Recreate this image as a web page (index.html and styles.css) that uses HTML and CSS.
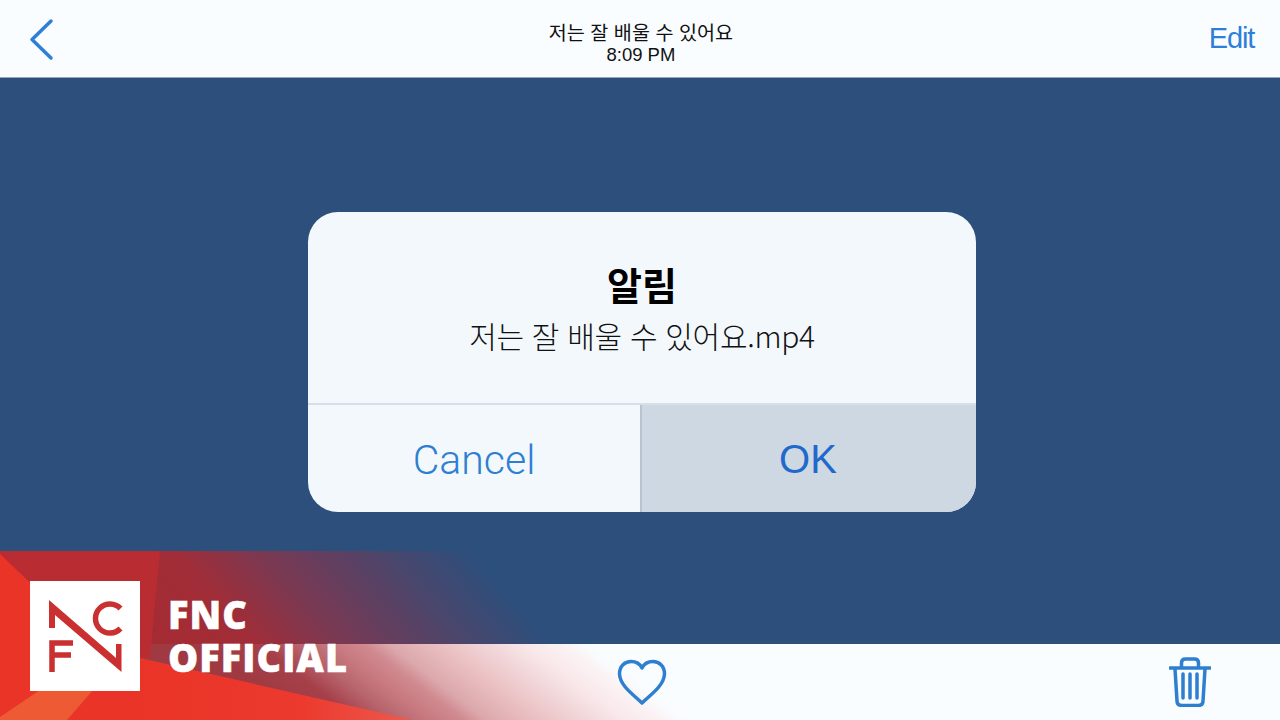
FILE: index.html
```html
<!DOCTYPE html>
<html lang="ko">

<head>
  <meta charset="utf-8">
  <title>저는 잘 배울 수 있어요</title>
  <link rel="stylesheet" href="styles.css">
</head>

<body>

  <div class="screen">
    <header class="topbar">
      <svg class="back-icon" width="26" height="46" viewBox="0 0 26 46">
        <path d="M22 4 L3 22.500 L22 41" />
      </svg>
      <div class="topbar-title">
        <div class="title-name">저는 잘 배울 수 있어요</div>
        <div class="title-time">8:09 PM</div>
      </div>
      <div class="edit-link">Edit</div>
    </header>

    <main class="stage">
      <div class="alert">
        <div class="alert-body">
          <div class="alert-title">알림</div>
          <div class="alert-text">저는 잘 배울 수 있어요.mp4</div>
        </div>
        <div class="alert-buttons">
          <div class="alert-btn btn-cancel">Cancel</div>
          <div class="alert-btn btn-ok">OK</div>
        </div>
      </div>
    </main>

    <footer class="toolbar">
      <svg class="heart-icon" width="50" height="46" viewBox="0 0 50 46">
        <path d="M25 44 C17 36 3 27 2.500 15 C2.500 7 8 2.500 14 2.500 C19 2.500 23 5 25 9 C27 5 31 2.500 36 2.500 C42 2.500 47.500 7 47.500 15 C47 27 33 36 25 44 Z" />
      </svg>
      <svg class="trash-icon" width="42" height="50" viewBox="0 0 42 50">
        <path d="M1 11 H41" />
        <path d="M12.500 10 V6 C12.500 3 14.500 2 16.500 2 H25.500 C27.500 2 29.500 3 29.500 6 V10" />
        <path d="M6 12 L8 44 C8 47 10 48.500 13 48.500 H29 C32 48.500 34 47 34 44 L36 12" />
        <path d="M14 17 V41 M21 17 V41 M28 17 V41" />
      </svg>
    </footer>
  </div>

  <!-- channel watermark, sits over the bottom left corner -->
  <div class="brand">
    <svg class="brand-bg" width="700" height="169" viewBox="0 0 700 169">
      <defs>
        <linearGradient id="fadeTop" gradientUnits="userSpaceOnUse" x1="100" y1="90" x2="355" y2="-134">
          <stop offset="0" stop-color="#a92a30" />
          <stop offset="0.34" stop-color="#a02d38" />
          <stop offset="0.51" stop-color="#7e3850" />
          <stop offset="0.61" stop-color="#6c3c5a" />
          <stop offset="0.83" stop-color="#46476e" />
          <stop offset="1" stop-color="#2c4f7c" />
        </linearGradient>
        <linearGradient id="fadeBottom" gradientUnits="userSpaceOnUse" x1="250" y1="129" x2="396" y2="-61">
          <stop offset="0" stop-color="#a03a42" />
          <stop offset="0.14" stop-color="#a5404a" />
          <stop offset="0.24" stop-color="#b8656d" />
          <stop offset="0.33" stop-color="#c87a80" />
          <stop offset="0.41" stop-color="#d08a90" />
          <stop offset="0.47" stop-color="#dba8ac" />
          <stop offset="0.6" stop-color="#ebc0c2" />
          <stop offset="0.72" stop-color="#f1d6d9" />
          <stop offset="0.82" stop-color="#f9e8ea" />
          <stop offset="0.92" stop-color="#fbf3f5" />
          <stop offset="1" stop-color="#f9fdff" stop-opacity="0" />
        </linearGradient>
        <linearGradient id="redBand" gradientUnits="userSpaceOnUse" x1="140" y1="0" x2="413" y2="0">
          <stop offset="0" stop-color="#ea3428" />
          <stop offset="0.6" stop-color="#ec3a2e" />
          <stop offset="1" stop-color="#ee5a50" />
        </linearGradient>
      </defs>
      <rect x="0" y="0" width="700" height="93" fill="url(#fadeTop)" />
      <rect x="0" y="93" width="700" height="76" fill="url(#fadeBottom)" />
      <polygon points="0,0 160,0 150,107 0,107" fill="#b92c31" />
      <polygon points="0,3 60,60 117,107 118,169 0,169" fill="#ea3428" />
      <polygon points="115,100 140,107 413,169 90,169" fill="url(#redBand)" />
      <polygon points="0,166 40,139 93,139 67,169 0,169" fill="#ee5a34" />
    </svg>
    <div class="brand-logo">
      <svg width="110" height="110" viewBox="0 0 110 110">
        <polygon class="logo-fill" points="19,47 19,19 86,77 86,63 91.500,63 91.500,91 25,34 25,47" />
        <path class="logo-line" d="M90.500 27.500 A14.500 14.500 0 1 0 90.500 47.500" />
        <path class="logo-line" d="M22 91 V62 H43 M22 74 H41" />
      </svg>
    </div>
    <div class="brand-name">FNC<br>OFFICIAL</div>
  </div>

</body>

</html>
```

FILE: styles.css
```css
body {
  margin: 0;
  width: 1280px;
  height: 720px;
  overflow: hidden;
  position: relative;
  font-family: "Liberation Sans", "Noto Sans CJK KR", sans-serif;
}

.screen {
  display: flex;
  flex-direction: column;
  height: 720px;
}

.topbar {
  height: 77px;
  flex: none;
  display: flex;
  align-items: center;
  justify-content: space-between;
  padding: 0 26px 0 29px;
  background-color: #f9fdff;
  border-bottom: 1px solid #98a6b8;
  position: relative;
}

.back-icon {
  margin-top: 2px;
}

.back-icon path {
  fill: none;
  stroke: #2f7fd8;
  stroke-width: 3.500;
  stroke-linecap: round;
  stroke-linejoin: round;
}

.topbar-title {
  text-align: center;
  color: #111;
  margin-left: 18px;
  padding-top: 8px;
}

.title-name {
  font-family: "Noto Sans CJK KR", sans-serif;
  font-size: 19.600px;
  line-height: 24px;
}

.title-time {
  font-size: 18.500px;
  line-height: 21px;
}

.edit-link {
  font-family: "Liberation Sans", sans-serif;
  font-size: 29px;
  letter-spacing: -1.200px;
  color: #2f7fd8;
}

.stage {
  flex: 1;
  display: flex;
  justify-content: center;
  padding-top: 134px;
  padding-left: 4px;
  background-color: #2c4f7c;
}

.alert {
  width: 668px;
  height: 300px;
  display: flex;
  flex-direction: column;
  border-radius: 30px;
  overflow: hidden;
  background-color: #f3f8fd;
}

.alert-body {
  height: 193px;
  flex: none;
  text-align: center;
  border-bottom: 2px solid #d8dfe8;
  box-sizing: border-box;
  padding-top: 43px;
  font-family: "Noto Sans CJK KR", sans-serif;
  color: #111;
}

.alert-title {
  font-size: 38px;
  font-weight: 700;
  line-height: 58px;
  color: #000;
}

.alert-text {
  font-size: 30px;
  font-weight: 300;
  letter-spacing: -0.300px;
  line-height: 44px;
}

.alert-buttons {
  flex: 1;
  display: flex;
}

.alert-btn {
  flex: 1;
  display: flex;
  align-items: center;
  justify-content: center;
  font-family: "Roboto", sans-serif;
  font-size: 41px;
  padding-top: 2px;
}

.btn-cancel {
  font-weight: 300;
  color: #2f7fd0;
}

.btn-ok {
  font-family: "Liberation Sans", sans-serif;
  font-size: 40px;
  color: #1f68cc;
  background-color: #ced8e2;
  border-left: 2px solid #b6c3d0;
  padding-right: 2px;
}

.toolbar {
  height: 76px;
  flex: none;
  display: flex;
  align-items: center;
  justify-content: space-between;
  padding-left: 617px;
  padding-right: 69px;
  background-color: #f9fdff;
}

.toolbar svg {
  position: relative;
  z-index: 1;
}

.heart-icon path {
  fill: none;
  stroke: #2f7fd0;
  stroke-width: 3.500;
  stroke-linejoin: round;
}

.trash-icon path {
  fill: none;
  stroke: #2f7fd0;
  stroke-width: 3.500;
  stroke-linecap: round;
  stroke-linejoin: round;
}

.brand {
  position: absolute;
  left: 0;
  top: 551px;
  width: 700px;
  height: 169px;
}

.brand-bg {
  position: absolute;
  left: 0;
  top: 0;
}

.brand-logo {
  position: absolute;
  left: 30px;
  top: 30px;
  width: 110px;
  height: 110px;
  background-color: #fff;
}

.logo-fill {
  fill: #c9302f;
}

.logo-line {
  fill: none;
  stroke: #c9302f;
  stroke-width: 5.500;
}

.brand-name {
  position: absolute;
  left: 168px;
  top: 42px;
  font-family: "Open Sans", sans-serif;
  font-size: 38px;
  font-weight: 800;
  letter-spacing: 1px;
  line-height: 43px;
  color: #fff;
  -webkit-text-stroke: 0.500px #fff;
}
```
